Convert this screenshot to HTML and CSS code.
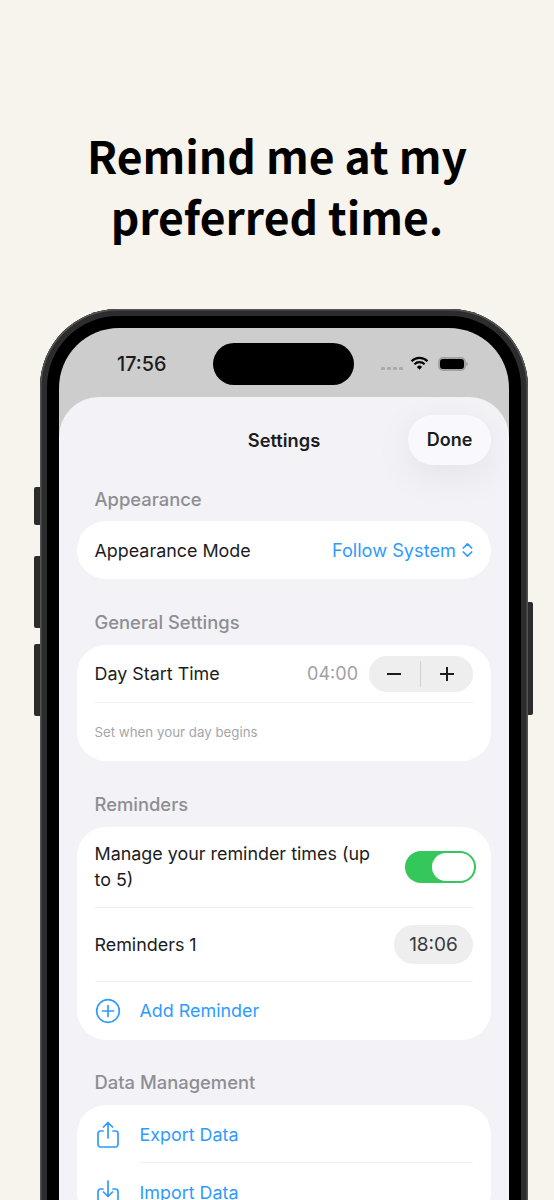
FILE: index.html
```html
<!doctype html>
<html>
<head>
    <meta charset="UTF-8">
    <title>Settings</title>
    <link rel="stylesheet" href="styles.css">
</head>
<body>
    <h1 class="headline">Remind me at my<br>preferred time.</h1>

    <div class="stage">
        <div class="phone">
            <span class="side-btn btn-silent"></span>
            <span class="side-btn btn-up"></span>
            <span class="side-btn btn-down"></span>
            <span class="side-btn btn-power"></span>

            <div class="screen">
                <div class="statusbar">
                    <span class="clock">17:56</span>
                    <span class="island"></span>
                    <span class="status-icons">
                        <span class="signal"><i></i><i></i><i></i><i></i></span>
                        <svg class="wifi" width="19" height="15" viewBox="0 0 19 15">
                            <path d="M1.5 5.2a11.4 11.4 0 0 1 16 0M4.4 8.2a7.3 7.3 0 0 1 10.2 0" fill="none" stroke="#000" stroke-width="2.1"/>
                            <path d="M6.9 10.9a3.7 3.7 0 0 1 5.2 0L9.500 13.800z" fill="#000"/>
                        </svg>
                        <span class="battery"><span class="battery-fill"></span></span>
                        <span class="battery-nub"></span>
                    </span>
                </div>

                <div class="sheet">
                    <div class="sheet-nav">
                        <span class="sheet-title">Settings</span>
                        <span class="done-btn">Done</span>
                    </div>

                    <h2 class="group-label label-first">Appearance</h2>
                    <div class="card">
                        <div class="row row-mode">
                            <span>Appearance Mode</span>
                            <span class="link mode-value">Follow System
                                <svg width="11" height="16" viewBox="0 0 11 16">
                                    <path d="M1.3 6 5.5 1.8 9.7 6M1.3 10l4.2 4.2L9.7 10" fill="none" stroke="#2f9bff" stroke-width="1.7" stroke-linecap="round" stroke-linejoin="round"/>
                                </svg>
                            </span>
                        </div>
                    </div>

                    <h2 class="group-label">General Settings</h2>
                    <div class="card">
                        <div class="row row-day">
                            <span>Day Start Time</span>
                            <span class="day-right">
                                <span class="day-time">04:00</span>
                                <span class="stepper">
                                    <svg width="16" height="16" viewBox="0 0 16 16"><path d="M1 8h14" stroke="#1c1c1e" stroke-width="2"/></svg>
                                    <span class="stepper-line"></span>
                                    <svg width="16" height="16" viewBox="0 0 16 16"><path d="M1 8h14M8 1v14" stroke="#1c1c1e" stroke-width="2"/></svg>
                                </span>
                            </span>
                        </div>
                        <div class="caption">Set when your day begins</div>
                    </div>

                    <h2 class="group-label">Reminders</h2>
                    <div class="card">
                        <div class="row row-manage">
                            <span class="manage-text">Manage your reminder times (up to 5)</span>
                            <span class="toggle"><span class="knob"></span></span>
                        </div>
                        <div class="row row-reminder">
                            <span>Reminders 1</span>
                            <span class="time-pill">18:06</span>
                        </div>
                        <div class="row row-add link">
                            <svg class="row-icon" width="26" height="26" viewBox="0 0 26 26">
                                <circle cx="13" cy="13" r="11.3" fill="none" stroke="#2f9bff" stroke-width="1.7"/>
                                <path d="M13 7.500v11M7.500 13h11" stroke="#2f9bff" stroke-width="1.7" stroke-linecap="round"/>
                            </svg>
                            <span>Add Reminder</span>
                        </div>
                    </div>

                    <h2 class="group-label label-last">Data Management</h2>
                    <div class="card">
                        <div class="action link">
                            <svg class="row-icon action-icon" width="26" height="28" viewBox="0 0 26 28">
                                <path d="M8 10H5.500a2.500 2.500 0 0 0-2.500 2.500V23.500A2.500 2.500 0 0 0 5.500 26h15a2.500 2.500 0 0 0 2.500-2.500V12.500a2.500 2.500 0 0 0-2.500-2.500H18M13 17V2M8.500 6 13 1.500 17.500 6" fill="none" stroke="#2f9bff" stroke-width="1.7" stroke-linecap="round" stroke-linejoin="round"/>
                            </svg>
                            <span class="action-text">Export Data</span>
                        </div>
                        <div class="action link">
                            <svg class="row-icon action-icon" width="26" height="28" viewBox="0 0 26 28">
                                <path d="M8 10H5.500a2.500 2.500 0 0 0-2.500 2.500V23.500A2.500 2.500 0 0 0 5.500 26h15a2.500 2.500 0 0 0 2.500-2.500V12.500a2.500 2.500 0 0 0-2.500-2.500H18M13 2v15M8.500 13l4.500 4.500 4.500-4.500" fill="none" stroke="#2f9bff" stroke-width="1.7" stroke-linecap="round" stroke-linejoin="round"/>
                            </svg>
                            <span class="action-text">Import Data</span>
                        </div>
                    </div>
                </div>
            </div>
        </div>
    </div>
</body>
</html>
```

FILE: styles.css
```css
html, body {
    margin: 0;
    height: 1200px;
    overflow: hidden;
}
body {
    background-color: #f7f4ee;
    font-family: Inter, "Liberation Sans", sans-serif;
    color: #1c1c1e;
}

.headline {
    margin: 0;
    padding-top: 124px;
    height: 309px;
    box-sizing: border-box;
    text-align: center;
    font-family: "Noto Sans CJK SC", "Noto Sans", sans-serif;
    font-size: 44.4px;
    line-height: 61px;
    font-weight: 700;
    color: #000;
}

/* the phone runs on below the page, so the stage cuts it off */
.stage {
    height: 891px;
    overflow: hidden;
    padding-left: 40px;
}
.phone {
    position: relative;
    width: 488px;
    height: 1000px;
    box-sizing: border-box;
    padding: 19px 19px 0;
    background-color: #000;
    border-radius: 78px;
    box-shadow: inset 0 0 0 1.5px #555, inset 0 0 0 7px #2c2c2c;
}
.side-btn {
    position: absolute;
    width: 6px;
    background-color: #2c2c2c;
}
.btn-silent { left: -6px; top: 178px; height: 38px; border-radius: 2px 0 0 2px; }
.btn-up { left: -6px; top: 247px; height: 72px; border-radius: 2px 0 0 2px; }
.btn-down { left: -6px; top: 335px; height: 72px; border-radius: 2px 0 0 2px; }
.btn-power { right: -5px; top: 293px; height: 113px; width: 5px; border-radius: 0 2px 2px 0; }

.screen {
    height: 981px;
    background-color: #cdcdcd;
    border-radius: 60px 60px 0 0;
    overflow: hidden;
}

/* status bar */
.statusbar {
    position: relative;
    height: 69px;
}
.clock {
    position: absolute;
    left: 58px;
    top: 25px;
    font-size: 19.8px;
    line-height: 23px;
    font-weight: 500;
}
.island {
    position: absolute;
    left: 154px;
    top: 15px;
    width: 141px;
    height: 42px;
    border-radius: 21px;
    background-color: #000;
}
.status-icons {
    position: absolute;
    left: 322px;
    top: 28px;
    display: flex;
    align-items: center;
}
.signal {
    display: flex;
    gap: 2px;
    margin-top: 10px;
    margin-right: 7px;
}
.signal i {
    width: 4px;
    height: 3px;
    border-radius: 1px;
    background-color: #a9a9a9;
}
.wifi {
    margin-right: 9px;
}
.battery {
    width: 28px;
    height: 14px;
    box-sizing: border-box;
    padding: 2px;
    border-radius: 5px;
    background-color: #a3a3a3;
}
.battery-fill {
    display: block;
    height: 100%;
    border-radius: 3px;
    background-color: #000;
}
.battery-nub {
    width: 2px;
    height: 4px;
    border-radius: 0 2px 2px 0;
    background-color: #a3a3a3;
}

/* settings sheet */
.sheet {
    height: 912px;
    padding: 0 18px;
    background-color: #f2f2f7;
    border-radius: 40px 40px 0 0;
    font-size: 17.9px;
}
.sheet-nav {
    position: relative;
    height: 86px;
    display: flex;
    justify-content: center;
}
.sheet-title {
    margin-top: 32px;
    line-height: 22px;
    font-size: 18.3px;
    font-weight: 600;
}
.done-btn {
    position: absolute;
    right: 0;
    top: 18px;
    width: 83px;
    height: 50px;
    border-radius: 25px;
    background-color: #f9f9fd;
    box-shadow: 0 10px 40px rgba(0, 0, 0, 0.07);
    text-align: center;
    line-height: 50px;
    font-size: 18px;
    font-weight: 600;
}
.group-label {
    margin: 32px 0 0;
    padding-left: 17.5px;
    height: 34px;
    line-height: 22px;
    font-size: 18.4px;
    font-weight: 500;
    color: #8e8e93;
}
.label-first {
    margin-top: 0;
    height: 38px;
    padding-top: 5px;
    box-sizing: border-box;
}
.label-last {
    margin-top: 31px;
}

.card {
    background-color: #fff;
    border-radius: 29px;
    padding: 0 18px 0 17.5px;
}
.row {
    display: flex;
    justify-content: space-between;
    align-items: center;
}
.link {
    color: #2f9bff;
}
.row-mode {
    height: 58px;
}
.mode-value {
    display: flex;
    align-items: center;
    gap: 6px;
    font-size: 18.2px;
}

.row-day {
    height: 57px;
    border-bottom: 1.5px solid #f0f0f2;
}
.day-right {
    display: flex;
    align-items: center;
    gap: 11px;
}
.day-time {
    color: #a0a0a4;
    font-size: 18px;
}
.stepper {
    width: 104px;
    height: 36px;
    border-radius: 18px;
    background-color: #eeeeef;
    display: flex;
    align-items: center;
    justify-content: space-between;
    padding: 0 18px 0 17px;
    box-sizing: border-box;
}
.stepper-line {
    width: 1.5px;
    height: 26px;
    background-color: #cfcfd2;
}
.caption {
    height: 57.5px;
    line-height: 59px;
    font-size: 13.3px;
    color: #a6a6aa;
}

.row-manage {
    height: 81.500px;
    box-sizing: border-box;
    border-bottom: 1.5px solid #f0f0f2;
}
.manage-text {
    width: 290px;
    line-height: 26px;
}
.toggle {
    width: 71px;
    height: 32px;
    margin-right: -2.500px;
    box-sizing: border-box;
    padding: 2px 2px 2px 27px;
    border-radius: 16px;
    background-color: #34c759;
}
.knob {
    display: block;
    height: 100%;
    border-radius: 14px;
    background-color: #fff;
}
.row-reminder {
    height: 74px;
    box-sizing: border-box;
    border-bottom: 1.5px solid #f0f0f2;
}
.time-pill {
    width: 79px;
    height: 39px;
    line-height: 39px;
    text-align: center;
    border-radius: 20px;
    background-color: #eeeeef;
    font-size: 19px;
    color: #3a3a3c;
}
.row-add {
    height: 57.500px;
    justify-content: flex-start;
    gap: 19px;
}
.row-icon {
    flex: none;
}

.action {
    display: flex;
    align-items: center;
    gap: 19px;
    height: 58px;
}
.action-icon {
    margin-top: 2px;
}
.action-text {
    flex: 1;
    height: 58px;
    line-height: 60px;
    border-bottom: 1.5px solid #f0f0f2;
    box-sizing: border-box;
}
```
